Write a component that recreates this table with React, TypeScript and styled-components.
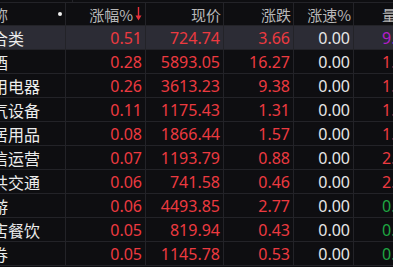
import React from 'react';
import styled, { createGlobalStyle } from 'styled-components';

const GlobalStyle = createGlobalStyle`
  html, body {
    margin: 0;
    padding: 0;
    background: #0e0e11;
    overflow: hidden;
  }
`;

type Tone = 'red' | 'white' | 'purple' | 'green';

const toneColor: Record<Tone, string> = {
  red: '#ec3a40',
  white: '#e6e6e6',
  purple: '#b51dcc',
  green: '#1fa641',
};

const rows = [
  { name: '综合类', pct: '0.51', price: '724.74', change: '3.66', speed: '0.00', ratio: '9.45', ratioTone: 'purple' as Tone },
  { name: '白酒', pct: '0.28', price: '5893.05', change: '16.27', speed: '0.00', ratio: '1.23', ratioTone: 'red' as Tone },
  { name: '家用电器', pct: '0.26', price: '3613.23', change: '9.38', speed: '0.00', ratio: '1.56', ratioTone: 'red' as Tone },
  { name: '电气设备', pct: '0.11', price: '1175.43', change: '1.31', speed: '0.00', ratio: '1.38', ratioTone: 'red' as Tone },
  { name: '家居用品', pct: '0.08', price: '1866.44', change: '1.57', speed: '0.00', ratio: '1.12', ratioTone: 'red' as Tone },
  { name: '通信运营', pct: '0.07', price: '1193.79', change: '0.88', speed: '0.00', ratio: '2.41', ratioTone: 'red' as Tone },
  { name: '公共交通', pct: '0.06', price: '741.58', change: '0.46', speed: '0.00', ratio: '2.17', ratioTone: 'red' as Tone },
  { name: '旅游', pct: '0.06', price: '4493.85', change: '2.77', speed: '0.00', ratio: '0.93', ratioTone: 'green' as Tone },
  { name: '酒店餐饮', pct: '0.05', price: '819.94', change: '0.43', speed: '0.00', ratio: '0.48', ratioTone: 'green' as Tone },
  { name: '证券', pct: '0.05', price: '1145.78', change: '0.53', speed: '0.00', ratio: '0.71', ratioTone: 'green' as Tone },
];

// red "sorted descending" arrow next to the active column title
const SortArrow = () => (
  <ArrowSvg width="7" height="14" viewBox="0 0 7 14">
    <line x1="3.5" y1="0" x2="3.5" y2="10" stroke="#e8303a" strokeWidth="1.4" />
    <path d="M0.5 8.5 L3.5 13.5 L6.5 8.5 Z" fill="#e8303a" />
  </ArrowSvg>
);

const App = () => (
  <>
    <GlobalStyle />
    <Table>
      <EdgeRow>
        <EdgeCell />
        <div />
      </EdgeRow>
      <HeaderRow>
        <NameHead>
          <NameText $head>名称</NameText>
          <Dot />
        </NameHead>
        <HeadCell>
          涨幅%
          <SortArrow />
        </HeadCell>
        <HeadCell>现价</HeadCell>
        <HeadCell>涨跌</HeadCell>
        <HeadCell>涨速%</HeadCell>
        <HeadCell>量比</HeadCell>
      </HeaderRow>
      {rows.map((r, i) => (
        <Row key={r.name} $active={i === 0}>
          <NameCell>
            <NameText>{r.name}</NameText>
          </NameCell>
          <NumCell $tone="red">{r.pct}</NumCell>
          <NumCell $tone="red">{r.price}</NumCell>
          <NumCell $tone="red">{r.change}</NumCell>
          <NumCell $tone="white">{r.speed}</NumCell>
          <NumCell $tone={r.ratioTone}>{r.ratio}</NumCell>
        </Row>
      ))}
    </Table>
  </>
);

export default App;

const line = '#232328';
const columns = '66px 80px 78px 70px 60px 70px';

const Table = styled.div`
  width: 393px;
  height: 267px;
  overflow: hidden;
  background: #0e0e11;
`;

const EdgeRow = styled.div`
  display: grid;
  grid-template-columns: 73px 1fr;
  height: 2px;
  border-bottom: 1px solid ${line};
`;

const EdgeCell = styled.div`
  border-right: 1px solid ${line};
`;

const HeaderRow = styled.div`
  display: grid;
  grid-template-columns: ${columns};
  height: 22px;
  border-bottom: 1px solid ${line};
  font-family: 'Noto Sans CJK SC', 'Noto Sans', sans-serif;
  font-size: 15px;
  color: #b8b8b8;
`;

const HeadCell = styled.div`
  display: flex;
  align-items: center;
  justify-content: flex-end;
  padding-right: 2px;
  border-right: 1px solid ${line};
  white-space: nowrap;
  overflow: hidden;

  &:last-child {
    justify-content: flex-start;
    padding-left: 28px;
  }
`;

const ArrowSvg = styled.svg`
  margin-left: 2px;
  margin-right: 1px;
  flex-shrink: 0;
`;

const NameHead = styled.div`
  display: flex;
  align-items: center;
  justify-content: space-between;
  padding-right: 3px;
  border-right: 1px solid ${line};
  overflow: hidden;
`;

const Dot = styled.span`
  width: 4px;
  height: 4px;
  border-radius: 50%;
  background: #f0f0f0;
  flex-shrink: 0;
`;

const Row = styled.div<{ $active?: boolean }>`
  display: grid;
  grid-template-columns: ${columns};
  height: 23px;
  border-bottom: 1px solid ${line};
  background: ${(p) => (p.$active ? '#2c2c35' : 'transparent')};
`;

const NameCell = styled.div`
  display: flex;
  align-items: center;
  border-right: 1px solid ${line};
  overflow: hidden;
`;

const NameText = styled.span<{ $head?: boolean }>`
  margin-left: ${(p) => (p.$head ? '-22px' : '-24px')};
  white-space: nowrap;
  font-family: 'Noto Sans CJK SC', sans-serif;
  font-size: ${(p) => (p.$head ? '15px' : '16px')};
  color: ${(p) => (p.$head ? '#b8b8b8' : '#ececec')};
`;

const NumCell = styled.div<{ $tone: Tone }>`
  display: flex;
  align-items: center;
  justify-content: flex-end;
  padding-right: 3px;
  border-right: 1px solid ${line};
  font-family: 'Noto Sans', sans-serif;
  font-size: 16px;
  color: ${(p) => toneColor[p.$tone]};
  white-space: nowrap;
  overflow: hidden;

  &:last-child {
    justify-content: flex-start;
    padding-left: 28px;
  }
`;
